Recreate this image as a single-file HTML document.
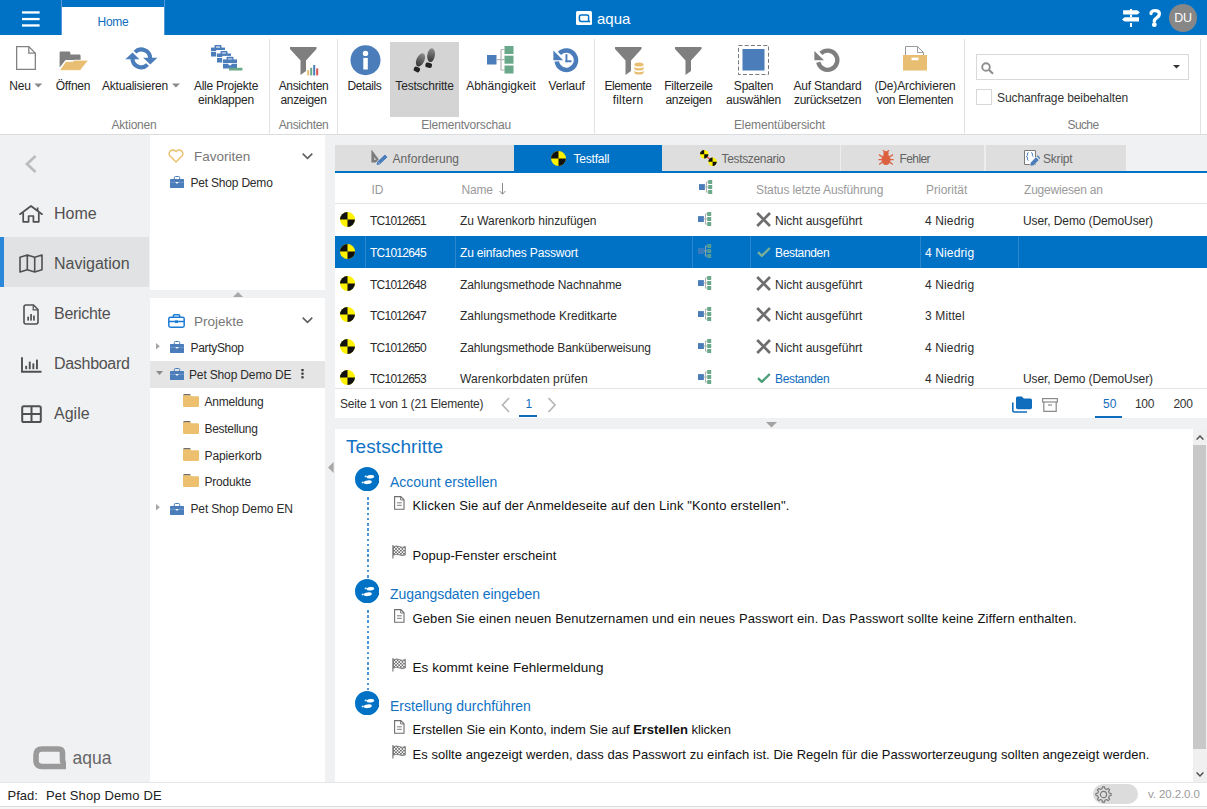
<!DOCTYPE html>
<html><head><meta charset="utf-8"><title>aqua</title>
<style>
*{box-sizing:border-box;margin:0;padding:0}
html,body{width:1207px;height:809px;overflow:hidden;background:#f0f1f3;font-family:"Liberation Sans",sans-serif;font-size:12px;color:#2b2b2b}
.abs{position:absolute}
#title{position:absolute;left:0;top:0;width:1207px;height:35px;background:#0072c6}
#hometab{position:absolute;left:62px;top:7px;width:102px;height:28px;background:#fff;color:#0f6cbd;font-size:12px;text-align:center;line-height:31px;letter-spacing:-0.3px}
#ribbon{position:absolute;left:0;top:35px;width:1207px;height:99px;background:#fff}
#ribline{position:absolute;left:0;top:134px;width:1207px;height:1px;background:#dcdcdc}
.sep{position:absolute;top:4px;width:1px;height:95px;background:#e2e2e2}
.rb{position:absolute;top:0;text-align:center;line-height:13.5px;font-size:12px;color:#262626;white-space:nowrap}
.rb .t{position:absolute;top:45px;left:0;transform:translateX(-50%);letter-spacing:-0.2px}
.gl{position:absolute;top:83px;font-size:12px;color:#7a7a7a;transform:translateX(-50%);white-space:nowrap;letter-spacing:-0.2px;line-height:14px}
#nav{position:absolute;left:0;top:135px;width:149px;height:647px;background:#f0f1f3}
.ni{position:absolute;left:0;width:149px;height:50px;font-size:16px;color:#505050}
.ni span{position:absolute;left:54px;top:17px;line-height:20px;white-space:nowrap}
#tree{position:absolute;left:150px;top:135px;width:175px;height:647px;background:#fff}
.tr{position:absolute;left:0;width:175px;height:26px;white-space:nowrap;letter-spacing:-0.2px}
.tr span{position:absolute;top:6px;line-height:14px}
#main{position:absolute;left:335px;top:135px;width:872px;height:647px}
.tab{position:absolute;top:10px;height:26px;background:#dedede;color:#646464;font-size:12px;line-height:14px;white-space:nowrap;letter-spacing:-0.2px}
.tab span{position:absolute;top:7px}
#grid{position:absolute;left:0;top:38px;width:872px;height:215px;background:#fff;overflow:hidden}
.hd{position:absolute;top:10px;line-height:14px;color:#9a9a9a;white-space:nowrap;letter-spacing:-0.2px}
.row{position:absolute;left:0;width:872px;height:32px;white-space:nowrap}
.row span{position:absolute;top:10px;line-height:14px;letter-spacing:-0.2px}
.row .id{left:35px;letter-spacing:-0.75px}
.row .nm{left:125px}
.row .st{left:440px}
.row .pr{left:590px;letter-spacing:0.13px}
.row .us{left:688px;letter-spacing:-0.1px}
.sel{background:#0072c6;color:#fff}
#pager{position:absolute;left:0;top:253px;width:872px;height:30px;background:#fff;border-top:1px solid #e4e4e4}
#steps{position:absolute;left:0;top:294px;width:872px;height:353px;background:#fff;overflow:hidden}
#status{position:absolute;left:0;top:782px;width:1207px;height:27px;background:#fff;border-top:1px solid #e6e6e6}
.stt{font-size:14px;line-height:18px;color:#0f72c4;white-space:nowrap}
.stx{font-size:13px;line-height:18px;color:#111;white-space:nowrap}
.sta{font-size:13.5px;line-height:18px;color:#111;white-space:nowrap;letter-spacing:0.04px}
</style></head><body>
<div id="title">
<div class="abs" style="left:61px;top:0;width:1px;height:35px;background:#4f9ad6"></div>
<div class="abs" style="left:164px;top:0;width:1px;height:35px;background:#4f9ad6"></div>
<div id="hometab">Home</div>
<svg class="abs" style="left:22px;top:11px;" width="18" height="16" viewBox="0 0 18 16"><rect x="0" y="0.3" width="17.6" height="2.3" fill="#fff"/><rect x="0" y="6.9" width="17.6" height="2.3" fill="#fff"/><rect x="0" y="13.3" width="17.6" height="2.3" fill="#fff"/></svg>
<svg class="abs" style="left:576px;top:11px;" width="16" height="14" viewBox="0 0 16 14"><rect x="0" y="0" width="16" height="14" rx="1.5" fill="#fff"/><path d="M5.2 3.9 H11 Q12.6 3.9 12.6 5.5 V9.2 L13.2 10.4 H5.2 Q3.4 10.4 3.4 8.6 V5.7 Q3.4 3.9 5.2 3.9Z" fill="none" stroke="#0072c6" stroke-width="1.5"/></svg>
<div class="abs" style="left:597px;top:9px;font-size:15px;line-height:20px;color:#fff">aqua</div>
<svg class="abs" style="left:1121px;top:8px;" width="20" height="20" viewBox="0 0 20 20"><rect x="9" y="1" width="2" height="2" fill="#fff"/><path d="M2.1 2.2H16.3L18.9 4.4L16.3 6.6H2.1Z" fill="#fff"/><rect x="9" y="6.6" width="2" height="2.7" fill="#fff"/><path d="M18 9.3H3.6L1 11.4L3.6 13.4H18Z" fill="#fff"/><rect x="9" y="15" width="2" height="4" fill="#fff"/></svg>
<svg class="abs" style="left:1147px;top:7px;" width="16" height="22" viewBox="0 0 16 22"><path d="M4 6.6C4 4.4 5.8 3.6 8 3.6C10.6 3.6 12.4 4.8 12.4 7C12.4 9 11 9.8 9.6 10.8C8 11.8 7.3 12.4 7.3 14.2" fill="none" stroke="#fff" stroke-width="3.3" stroke-linecap="round"/><circle cx="7.3" cy="17.7" r="2.4" fill="#fff"/></svg>
<div class="abs" style="left:1169px;top:4px;width:28px;height:28px;border-radius:14px;background:#878787;color:#fff;font-size:12.5px;line-height:29px;text-align:center;letter-spacing:-0.2px">DU</div>
</div>
<div id="ribbon">
<div class="sep" style="left:269px"></div><div class="sep" style="left:337px"></div><div class="sep" style="left:594px"></div><div class="sep" style="left:964px"></div><div class="sep" style="left:1200px"></div>
<div class="rb" style="left:26px"><svg class="abs" style="left:-10px;top:11px;" width="20" height="24" viewBox="0 0 20 24"><path d="M0.65 0.65H12.8L19.35 7.2V23.35H0.65Z" fill="#fff" stroke="#828282" stroke-width="1.3"/><path d="M12.8 0.65V7.2H19.35" fill="none" stroke="#828282" stroke-width="1.3"/></svg><div class="t">Neu<svg width="8" height="5" viewBox="0 0 8 5" style="margin-left:4px;vertical-align:2px"><path d="M0 0.5H8L4 4.5Z" fill="#8a8a8a"/></svg></div></div>
<div class="rb" style="left:73px"><svg class="abs" style="left:-14px;top:16px;" width="30" height="20" viewBox="0 0 30 20"><path d="M1.8 0.6H10Q11.4 0.6 11.4 2V3.6H20.2Q21.6 3.6 21.6 5V9H6.5L0.6 16.5V1.8Q0.6 0.6 1.8 0.6Z" fill="#7f7f7f"/><path d="M6.8 10.6H13.6L15.2 9.2H29.4L21.2 19.4H0.6Z" fill="#e8be72" stroke="#fff" stroke-width="0.7"/></svg><div class="t">Öffnen</div></div>
<div class="rb" style="left:141px"><svg class="abs" style="left:-16.4px;top:11.5px;" width="33" height="23" viewBox="0 0 33 23"><g fill="none" stroke="#4a7dba" stroke-width="4.1"><path d="M10.04 5.14A8.85 8.85 0 0 1 25.15 11.1"/><path d="M22.56 17.66A8.85 8.85 0 0 1 7.45 12"/></g><path d="M0.4 12.2L7.5 5.4L14.4 12.2Z" fill="#4a7dba"/><path d="M18.2 10.85H32.4L25.3 17.5Z" fill="#4a7dba"/></svg><div class="t">Aktualisieren<svg width="8" height="5" viewBox="0 0 8 5" style="margin-left:4px;vertical-align:2px"><path d="M0 0.5H8L4 4.5Z" fill="#8a8a8a"/></svg></div></div>
<div class="rb" style="left:226px"><svg class="abs" style="left:-15.2px;top:10.3px;" width="32" height="27" viewBox="0 0 32 27"><g transform="translate(0,0)"><path d="M4.5 0h5a1 1 0 0 1 1 1v2h-1.6v-1.4h-3.8v1.4h-1.6v-2a1 1 0 0 1 1-1z" fill="#4a7dba"/><rect x="0" y="2.6" width="14" height="3.6" fill="#4a7dba"/><path d="M0 7h5.6v1.4h2.8v-1.4h5.6v4.6h-14z" fill="#4a7dba"/></g><rect x="5.2" y="5" width="15.5" height="13" fill="#fff"/><g transform="translate(6,5.9)"><path d="M4.5 0h5a1 1 0 0 1 1 1v2h-1.6v-1.4h-3.8v1.4h-1.6v-2a1 1 0 0 1 1-1z" fill="#4a7dba"/><rect x="0" y="2.6" width="14" height="3.6" fill="#4a7dba"/><path d="M0 7h5.6v1.4h2.8v-1.4h5.6v4.6h-14z" fill="#4a7dba"/></g><rect x="11.2" y="10.9" width="15.5" height="13" fill="#fff"/><g transform="translate(12,11.8)"><path d="M4.5 0h5a1 1 0 0 1 1 1v2h-1.6v-1.4h-3.8v1.4h-1.6v-2a1 1 0 0 1 1-1z" fill="#4a7dba"/><rect x="0" y="2.6" width="14" height="3.6" fill="#4a7dba"/><path d="M0 7h5.6v1.4h2.8v-1.4h5.6v4.6h-14z" fill="#4a7dba"/></g><rect x="18" y="22.8" width="13.4" height="2.7" fill="#6aa88a"/></svg><div class="t"><span style="letter-spacing:-0.25px">Alle Projekte</span><br>einklappen</div></div>
<div class="rb" style="left:303.5px"><svg class="abs" style="left:-13.6px;top:12px;" width="30" height="29" viewBox="0 0 30 29"><path d="M0 0H26.5V2L16 13.5V24L10.5 28V13.5L0 2Z" fill="#7f7f7f"/><rect x="17.2" y="23.2" width="2" height="5.2" fill="#e8be72"/><rect x="20.2" y="20.8" width="2" height="7.6" fill="#6aa88a"/><rect x="23.2" y="18" width="2" height="10.4" fill="#4a7dba"/><rect x="26.2" y="21.4" width="2" height="7" fill="#d9534f"/></svg><div class="t"><span style="letter-spacing:-0.33px">Ansichten<br>anzeigen</span></div></div>
<div class="rb" style="left:364.5px"><svg class="abs" style="left:-15px;top:9.5px;" width="31" height="31" viewBox="0 0 31 31"><circle cx="15.5" cy="15.2" r="15" fill="#4a7dba"/><circle cx="15.5" cy="8.4" r="2.7" fill="#fff"/><rect x="13.3" y="12.9" width="4.5" height="11.6" fill="#fff"/></svg><div class="t"><span style="letter-spacing:-0.39px">Details</span></div></div>
<div class="abs" style="left:390px;top:7px;width:69px;height:75px;background:#d4d4d4"></div>
<div class="rb" style="left:424.5px"><svg class="abs" style="left:-12.5px;top:12.5px;" width="25" height="25" viewBox="0 0 25 25"><defs><linearGradient id="fg" x1="0" y1="0" x2="0" y2="1"><stop offset="0" stop-color="#8c8c8c"/><stop offset="1" stop-color="#363636"/></linearGradient></defs><ellipse cx="19.1" cy="7.2" rx="3.8" ry="6.9" transform="rotate(8 19.1 7.2)" fill="url(#fg)"/><rect x="13.4" y="14.8" width="6.6" height="4.9" rx="1.8" transform="rotate(12 16.7 17.2)" fill="#242424"/><ellipse cx="8.5" cy="11.9" rx="3.9" ry="7" transform="rotate(25 8.5 11.9)" fill="url(#fg)"/><rect x="1.8" y="19" width="6.2" height="4.9" rx="1.8" transform="rotate(25 4.9 21.4)" fill="#242424"/></svg><div class="t">Testschritte</div></div>
<div class="rb" style="left:501px"><svg class="abs" style="left:-14.2px;top:11px;" width="27" height="28" viewBox="0 0 27 28"><rect x="0" y="9" width="9.5" height="9.5" fill="#4a7dba"/><path d="M9.5 13.7H17.5M14 3.5V24H17.5M14 3.5H17.5" fill="none" stroke="#b5b5b5" stroke-width="1.2"/><rect x="17.5" y="0" width="9" height="8" fill="#6aa88a"/><rect x="17.5" y="9.7" width="9" height="8" fill="#6aa88a"/><rect x="17.5" y="19.5" width="9" height="8" fill="#6aa88a"/></svg><div class="t"><span style="letter-spacing:0.03px">Abhängigkeit</span></div></div>
<div class="rb" style="left:566.6px"><svg class="abs" style="left:-14px;top:12.6px;" width="26" height="25" viewBox="0 0 26 25"><path d="M3.7 13.55A9.7 9.7 0 1 0 6.44 5.34" fill="none" stroke="#4a7dba" stroke-width="4.5"/><path d="M0.4 2.4V12.2H10.1Z" fill="#4a7dba"/><rect x="12.5" y="6.2" width="1.9" height="8" fill="#4a7dba"/><rect x="12.5" y="12.3" width="6" height="1.9" fill="#4a7dba"/></svg><div class="t">Verlauf</div></div>
<div class="rb" style="left:628px"><svg class="abs" style="left:-13px;top:12px;" width="30" height="29" viewBox="0 0 30 29"><path d="M0 0H26.5V2L16 13.5V24L10.5 28V13.5L0 2Z" fill="#7f7f7f"/><rect x="18.4" y="14.6" width="11.2" height="14" fill="#fff"/><g fill="#e8be72"><ellipse cx="24" cy="17.6" rx="4.6" ry="2"/><path d="M19.4 19.2a4.6 2 0 0 0 9.2 0v2.4a4.6 2 0 0 1-9.2 0z"/><path d="M19.4 23.2a4.6 2 0 0 0 9.2 0v2.4a4.6 2 0 0 1-9.2 0z"/></g></svg><div class="t"><span style="letter-spacing:-0.44px">Elemente</span><br><span style="letter-spacing:0.17px">filtern</span></div></div>
<div class="rb" style="left:688.5px"><svg class="abs" style="left:-13.5px;top:12px;" width="27" height="28" viewBox="0 0 27 28"><path d="M0 0H26.5V2L16 13.5V24L10.5 28V13.5L0 2Z" fill="#7f7f7f"/></svg><div class="t"><span style="letter-spacing:-0.25px">Filterzeile</span><br><span style="letter-spacing:-0.34px">anzeigen</span></div></div>
<div class="rb" style="left:753.5px"><svg class="abs" style="left:-15.7px;top:10px;" width="31" height="30" viewBox="0 0 31 30"><rect x="0.5" y="0.5" width="30" height="29" fill="none" stroke="#7a7a7a" stroke-width="1" stroke-dasharray="4 2.2"/><rect x="4.5" y="4" width="22" height="21.5" fill="#4a7dba"/></svg><div class="t">Spalten<br><span style="letter-spacing:-0.29px">auswählen</span></div></div>
<div class="rb" style="left:827.5px"><svg class="abs" style="left:-13.6px;top:12.6px;" width="27" height="25" viewBox="0 0 27 25"><path d="M4.31 14.2A9.6 9.6 0 1 0 6.91 5.41" fill="none" stroke="#7f7f7f" stroke-width="4.4"/><path d="M0.4 2.9V12.2H10Z" fill="#7f7f7f"/></svg><div class="t"><span style="letter-spacing:-0.15px">Auf Standard</span><br><span style="letter-spacing:-0.3px">zurücksetzen</span></div></div>
<div class="rb" style="left:915px"><svg class="abs" style="left:-11.8px;top:11px;" width="24" height="25" viewBox="0 0 24 25"><path d="M2.5 0.5H14.5L20.5 6.5V10H2.5Z" fill="#fff" stroke="#9a9a9a"/><path d="M14.5 0.5V6.5H20.5" fill="none" stroke="#9a9a9a"/><rect x="0" y="9" width="24" height="15.5" fill="#e8be72"/><rect x="8.5" y="11.6" width="7" height="2.6" fill="#fff"/></svg><div class="t"><span style="letter-spacing:-0.15px">(De)Archivieren</span><br><span style="letter-spacing:-0.27px">von Elementen</span></div></div>
<div class="gl" style="left:134px;letter-spacing:-0.2px">Aktionen</div><div class="gl" style="left:303.5px;letter-spacing:-0.33px">Ansichten</div><div class="gl" style="left:466px;letter-spacing:-0.2px">Elementvorschau</div><div class="gl" style="left:779.5px;letter-spacing:-0.1px">Elementübersicht</div><div class="gl" style="left:1083px;letter-spacing:-0.62px">Suche</div>
<div class="abs" style="left:976px;top:19px;width:213px;height:26px;border:1px solid #d8d8d8;background:#fff"></div>
<svg class="abs" style="left:980.5px;top:26.5px;" width="13" height="13" viewBox="0 0 13 13"><circle cx="5" cy="5" r="3.8" fill="none" stroke="#8e8e8e" stroke-width="1.9"/><path d="M7.8 7.8L12 11.8" stroke="#8e8e8e" stroke-width="2.1"/></svg>
<svg class="abs" style="left:1173px;top:30px;" width="7" height="4" viewBox="0 0 7 4"><path d="M0 0H7L3.5 3.6Z" fill="#333"/></svg>
<div class="abs" style="left:976px;top:54px;width:16px;height:16px;border:1px solid #d8d8d8;background:#fff"></div>
<div class="abs" style="left:997px;top:56px;line-height:14px;white-space:nowrap;letter-spacing:-0.1px;color:#333">Suchanfrage beibehalten</div>
</div><div id="ribline"></div>
<div id="nav">
<svg class="abs" style="left:25px;top:20px;" width="12" height="18" viewBox="0 0 12 18"><path d="M10.5 1L2 9L10.5 17" fill="none" stroke="#bcbcbc" stroke-width="2.7"/></svg>
<div class="ni" style="top:52px"><svg class="abs" style="left:19px;top:18px;" width="24" height="18" viewBox="0 0 24 18"><path d="M1 9.2L12 1L23 9.2" fill="none" stroke="#505050" stroke-width="1.7" stroke-linejoin="round" stroke-linecap="round"/><path d="M4.2 7.5V16.8H9.6V11H14.4V16.8H19.8V7.5M18.6 2.5V6" fill="none" stroke="#505050" stroke-width="1.7" stroke-linejoin="round"/></svg><span>Home</span></div>
<div class="ni" style="top:102px;background:#e1e2e3"><div class="abs" style="left:0;top:0;width:4px;height:50px;background:#2b88d8"></div><svg class="abs" style="left:19px;top:17px;" width="24" height="19" viewBox="0 0 24 19"><path d="M1 3.2L8.3 1L15.7 3.2L23 1V15.8L15.7 18L8.3 15.8L1 18Z M8.3 1V15.8M15.7 3.2V18" fill="none" stroke="#505050" stroke-width="1.6" stroke-linejoin="round"/></svg><span>Navigation</span></div>
<div class="ni" style="top:152px"><svg class="abs" style="left:23px;top:17px;" width="16" height="21" viewBox="0 0 16 21"><path d="M3 1H10.5L15 5.5V18a2 2 0 0 1-2 2H3a2 2 0 0 1-2-2V3a2 2 0 0 1 2-2z" fill="none" stroke="#505050" stroke-width="1.6"/><path d="M10.2 1.4V5.8H14.6" fill="none" stroke="#505050" stroke-width="1.2"/><rect x="4.3" y="12.6" width="1.7" height="4" fill="#505050"/><rect x="7.2" y="10" width="1.7" height="6.6" fill="#505050"/><rect x="10.1" y="11.6" width="1.7" height="5" fill="#505050"/></svg><span style="letter-spacing:-0.29px">Berichte</span></div>
<div class="ni" style="top:202px"><svg class="abs" style="left:21px;top:20px;" width="21" height="16" viewBox="0 0 21 16"><path d="M1 0.2V14.8H20.5" fill="none" stroke="#505050" stroke-width="1.9"/><rect x="4.2" y="8.8" width="1.9" height="3.4" fill="#505050"/><rect x="7.8" y="4.6" width="1.9" height="7.6" fill="#505050"/><rect x="11.4" y="6.4" width="1.9" height="5.8" fill="#505050"/><rect x="15" y="2.6" width="1.9" height="9.6" fill="#505050"/></svg><span style="letter-spacing:-0.3px">Dashboard</span></div>
<div class="ni" style="top:252px"><svg class="abs" style="left:20.6px;top:18.4px;" width="22" height="19" viewBox="0 0 22 19"><rect x="1.2" y="1.2" width="18.6" height="15.8" rx="1.6" fill="none" stroke="#505050" stroke-width="2"/><path d="M1.2 9.1H19.8M10.5 1.2V17" stroke="#505050" stroke-width="2"/></svg><span>Agile</span></div>
<svg class="abs" style="left:33px;top:611px;" width="33" height="25" viewBox="0 0 33 25"><path d="M9 3H25.5Q29.5 3 29.5 7V14.5L31.5 20.5H9Q3 20.5 3 14.5V9Q3 3 9 3Z" fill="none" stroke="#9a9a9a" stroke-width="5.6" stroke-linejoin="round"/></svg>
<div class="abs" style="left:72.6px;top:611px;font-size:17.5px;line-height:24px;color:#666">aqua</div>
</div>
<div id="tree">
<svg class="abs" style="left:18px;top:14px;" width="16" height="14" viewBox="0 0 16 14"><path d="M8 13L1.8 6.8A3.6 3.6 0 0 1 8 2.6A3.6 3.6 0 0 1 14.2 6.8Z" fill="none" stroke="#ecbd6c" stroke-width="1.4" stroke-linejoin="round"/></svg>
<div class="abs" style="left:44px;top:12.5px;font-size:13.5px;line-height:18px;color:#777">Favoriten</div>
<svg class="abs" style="left:152px;top:18px;" width="11" height="7" viewBox="0 0 11 7"><path d="M0.7 0.7L5.5 5.3L10.3 0.7" fill="none" stroke="#5e5e5e" stroke-width="1.6"/></svg>
<div class="tr" style="top:35px"><svg class="abs" style="left:20px;top:6px;" width="14" height="12" viewBox="0 0 14 12"><path d="M4.3 3V1.6Q4.3 0.5 5.4 0.5H8.6Q9.7 0.5 9.7 1.6V3" fill="none" stroke="#4a7dba" stroke-width="1"/><rect x="0" y="2.9" width="14" height="9" rx="0.6" fill="#4a7dba"/><path d="M0 6.3H5.2L7 7.6L8.8 6.3H14" fill="none" stroke="#fff" stroke-width="0.5" opacity="0.45"/><path d="M5.2 6.1H8.8L7 7.7Z" fill="#fff"/></svg><span style="left:40.5px">Pet Shop Demo</span></div>
<div class="abs" style="left:0;top:155px;width:175px;height:8px;background:#f0f1f3"></div>
<svg class="abs" style="left:83px;top:157px;" width="10" height="5" viewBox="0 0 10 5"><path d="M0 5L5 0L10 5Z" fill="#a8a8a8"/></svg>
<svg class="abs" style="left:18px;top:179px;" width="17" height="14" viewBox="0 0 17 14"><rect x="0.8" y="3.2" width="15.4" height="10" rx="1.6" fill="none" stroke="#1a7cd5" stroke-width="1.5"/><path d="M5.4 3.2V1.6a0.8 0.8 0 0 1 .8-.8h4.6a0.8 0.8 0 0 1 .8.8V3.2M0.8 7.6H16.2" fill="none" stroke="#1a7cd5" stroke-width="1.5"/><rect x="7" y="6.4" width="3" height="2.6" fill="#1a7cd5"/></svg>
<div class="abs" style="left:44px;top:178px;font-size:13.5px;line-height:18px;color:#777">Projekte</div>
<svg class="abs" style="left:152px;top:182px;" width="11" height="7" viewBox="0 0 11 7"><path d="M0.7 0.7L5.5 5.3L10.3 0.7" fill="none" stroke="#5e5e5e" stroke-width="1.6"/></svg>
<div class="tr" style="top:200px"><svg class="abs" style="left:6px;top:7.5px;" width="4" height="7" viewBox="0 0 4 7"><path d="M0 0L3.8 3.3L0 6.6Z" fill="#a4a4a4"/></svg><svg class="abs" style="left:20px;top:6px;" width="14" height="12" viewBox="0 0 14 12"><path d="M4.3 3V1.6Q4.3 0.5 5.4 0.5H8.6Q9.7 0.5 9.7 1.6V3" fill="none" stroke="#4a7dba" stroke-width="1"/><rect x="0" y="2.9" width="14" height="9" rx="0.6" fill="#4a7dba"/><path d="M0 6.3H5.2L7 7.6L8.8 6.3H14" fill="none" stroke="#fff" stroke-width="0.5" opacity="0.45"/><path d="M5.2 6.1H8.8L7 7.7Z" fill="#fff"/></svg><span style="left:40.5px;letter-spacing:-0.32px">PartyShop</span></div>
<div class="tr" style="top:226px;height:27px;background:#e5e5e5"><svg class="abs" style="left:6px;top:10px;" width="7" height="4" viewBox="0 0 7 4"><path d="M0 0H7L3.5 4Z" fill="#8a8a8a"/></svg><svg class="abs" style="left:20px;top:7px;" width="14" height="12" viewBox="0 0 14 12"><path d="M4.3 3V1.6Q4.3 0.5 5.4 0.5H8.6Q9.7 0.5 9.7 1.6V3" fill="none" stroke="#4a7dba" stroke-width="1"/><rect x="0" y="2.9" width="14" height="9" rx="0.6" fill="#4a7dba"/><path d="M0 6.3H5.2L7 7.6L8.8 6.3H14" fill="none" stroke="#fff" stroke-width="0.5" opacity="0.45"/><path d="M5.2 6.1H8.8L7 7.7Z" fill="#fff"/></svg><span style="left:39px;top:7px;letter-spacing:-0.15px">Pet Shop Demo DE</span><svg class="abs" style="left:151px;top:8px;" width="3" height="10" viewBox="0 0 3 10"><rect x="0.4" y="0" width="2.2" height="2.2" fill="#333"/><rect x="0.4" y="3.6" width="2.2" height="2.2" fill="#333"/><rect x="0.4" y="7.2" width="2.2" height="2.2" fill="#333"/></svg></div>
<div class="tr" style="top:254px"><svg class="abs" style="left:33px;top:5px;" width="16" height="13" viewBox="0 0 16 13"><path d="M0.6 0.1H7.4V1.7H0.2Z" fill="#6e6e6e"/><path d="M0 2.4Q0 1.3 1.2 1.3H7.2L8.4 2.3H14.8Q16 2.3 16 3.5V11.8Q16 13 14.8 13H1.2Q0 13 0 11.8Z" fill="#ecc06e"/></svg><span style="left:54.5px">Anmeldung</span></div>
<div class="tr" style="top:281px"><svg class="abs" style="left:33px;top:5px;" width="16" height="13" viewBox="0 0 16 13"><path d="M0.6 0.1H7.4V1.7H0.2Z" fill="#6e6e6e"/><path d="M0 2.4Q0 1.3 1.2 1.3H7.2L8.4 2.3H14.8Q16 2.3 16 3.5V11.8Q16 13 14.8 13H1.2Q0 13 0 11.8Z" fill="#ecc06e"/></svg><span style="left:54.5px;letter-spacing:-0.3px">Bestellung</span></div>
<div class="tr" style="top:308px"><svg class="abs" style="left:33px;top:5px;" width="16" height="13" viewBox="0 0 16 13"><path d="M0.6 0.1H7.4V1.7H0.2Z" fill="#6e6e6e"/><path d="M0 2.4Q0 1.3 1.2 1.3H7.2L8.4 2.3H14.8Q16 2.3 16 3.5V11.8Q16 13 14.8 13H1.2Q0 13 0 11.8Z" fill="#ecc06e"/></svg><span style="left:54.5px;letter-spacing:-0.1px">Papierkorb</span></div>
<div class="tr" style="top:334px"><svg class="abs" style="left:33px;top:5px;" width="16" height="13" viewBox="0 0 16 13"><path d="M0.6 0.1H7.4V1.7H0.2Z" fill="#6e6e6e"/><path d="M0 2.4Q0 1.3 1.2 1.3H7.2L8.4 2.3H14.8Q16 2.3 16 3.5V11.8Q16 13 14.8 13H1.2Q0 13 0 11.8Z" fill="#ecc06e"/></svg><span style="left:54.5px">Produkte</span></div>
<div class="tr" style="top:361px"><svg class="abs" style="left:6px;top:8px;" width="4" height="7" viewBox="0 0 4 7"><path d="M0 0L3.8 3.3L0 6.6Z" fill="#a4a4a4"/></svg><svg class="abs" style="left:20px;top:7px;" width="14" height="12" viewBox="0 0 14 12"><path d="M4.3 3V1.6Q4.3 0.5 5.4 0.5H8.6Q9.7 0.5 9.7 1.6V3" fill="none" stroke="#4a7dba" stroke-width="1"/><rect x="0" y="2.9" width="14" height="9" rx="0.6" fill="#4a7dba"/><path d="M0 6.3H5.2L7 7.6L8.8 6.3H14" fill="none" stroke="#fff" stroke-width="0.5" opacity="0.45"/><path d="M5.2 6.1H8.8L7 7.7Z" fill="#fff"/></svg><span style="left:40.5px;letter-spacing:-0.15px">Pet Shop Demo EN</span></div>
</div>
<svg class="abs" style="left:328px;top:462px;" width="6" height="11" viewBox="0 0 6 11"><path d="M5.6 0V11L0 5.5Z" fill="#a8a8a8"/></svg>
<div id="main">
<div class="tab" style="left:0;width:179px"><svg class="abs" style="left:35.5px;top:3.6px;" width="18" height="18" viewBox="0 0 18 18"><path d="M0.4 0.6V13.4H10.2Z M3.2 8.2V10.8H5.3Z" fill="#7c7c7c" fill-rule="evenodd"/><path d="M5 16.6L5.5 13L13.9 5L17 8.2L8.6 16Z" fill="#4a7dba" stroke="#e6e6e6" stroke-width="0.9"/><path d="M7.2 13.2L8.6 14.7" stroke="#dfe8f4" stroke-width="0.6"/></svg><span style="left:57.5px;letter-spacing:0.05px">Anforderung</span></div>
<div class="tab" style="left:179px;width:148px;background:#0072c6;color:#fff"><svg class="abs" style="left:37px;top:5.5px;" width="15" height="15" viewBox="0 0 16 16"><circle cx="8" cy="8" r="8" fill="#fff200"/><path d="M8 0A8 8 0 0 0 0 8H8Z" fill="#111"/><path d="M8 16A8 8 0 0 0 16 8H8Z" fill="#111"/></svg><span style="left:59.5px">Testfall</span></div>
<div class="tab" style="left:327px;width:178px"><svg class="abs" style="left:37.8px;top:5px;" width="17" height="16" viewBox="0 0 17 16"><path d="M4 4L13 12" stroke="#d33" stroke-width="1.2"/><g><circle cx="4.2" cy="4.2" r="4.2" fill="#fff200"/><path d="M4.2 0A4.2 4.2 0 0 0 0 4.2H4.2Z M4.2 8.4A4.2 4.2 0 0 0 8.4 4.2H4.2Z" fill="#111"/></g><g transform="translate(8.4,7.6)"><circle cx="4.2" cy="4.2" r="4.2" fill="#fff200"/><path d="M4.2 0A4.2 4.2 0 0 0 0 4.2H4.2Z M4.2 8.4A4.2 4.2 0 0 0 8.4 4.2H4.2Z" fill="#111"/></g></svg><span style="left:59.5px;letter-spacing:-0.33px">Testszenario</span></div>
<div class="abs" style="left:505px;top:10px;width:1px;height:26px;background:#ededed"></div>
<div class="tab" style="left:506px;width:143px"><svg class="abs" style="left:37px;top:5px;" width="16" height="16" viewBox="0 0 16 16"><ellipse cx="8" cy="9.6" rx="4.5" ry="5.4" fill="#dc6141"/><circle cx="8" cy="3.6" r="2.6" fill="#dc6141"/><path d="M4.4 7L1 4.6M4 9.6H0.4M4.4 12L1.2 14.6M11.6 7L15 4.6M12 9.6H15.6M11.6 12L14.8 14.6M6.6 1.8L5 0.2M9.4 1.8L11 0.2" stroke="#dc6141" stroke-width="1.3" fill="none"/></svg><span style="left:58.5px;letter-spacing:-0.6px">Fehler</span></div>
<div class="abs" style="left:649px;top:10px;width:2px;height:26px;background:#ededed"></div>
<div class="tab" style="left:651px;width:140px"><svg class="abs" style="left:37.5px;top:5px;" width="16" height="16" viewBox="0 0 16 16"><path d="M0.5 0.5H11.5V14.5H0.5Z" fill="#fff" stroke="#7a7a7a"/><path d="M4.6 2.6Q3.4 2.6 3.4 4V5.4Q3.4 6.4 2.4 6.6Q3.4 6.8 3.4 7.8V9.2Q3.4 10.4 4.6 10.4M7.2 2.6Q8.4 2.6 8.4 4V5.4Q8.4 6.4 9.4 6.6" fill="none" stroke="#4a7dba" stroke-width="1"/><path d="M6 16.2L6.4 12.8L12 7L15.2 10L9.4 15.8Z" fill="#4a7dba" stroke="#e6e6e6" stroke-width="0.7"/><path d="M12.8 6.2L13.8 5.2L16.4 7.8L15.6 9Z" fill="#4a7dba"/></svg><span style="left:57px">Skript</span></div>
<div class="abs" style="left:0;top:36px;width:872px;height:2px;background:#0072c6"></div><div id="grid"><div class="hd" style="left:36.5px">ID</div><div class="hd" style="left:126.5px">Name</div><svg class="abs" style="left:164px;top:10px;" width="7" height="12" viewBox="0 0 7 12"><path d="M3.5 0V11M0.6 8L3.5 11.2L6.4 8" fill="none" stroke="#8a8a8a" stroke-width="1"/></svg><svg class="abs" style="left:364px;top:6.5px;opacity:1" width="14" height="14" viewBox="0 0 14 14"><rect x="0" y="4.1" width="5.9" height="5.9" fill="#4a7dba"/><path d="M5.9 7H9.2M7.5 2V12H9.2M7.5 2H9.2" fill="none" stroke="#b2b2b2" stroke-width="1.1"/><rect x="9.2" y="0" width="4" height="4" fill="#6aa88a"/><rect x="9.2" y="5" width="4" height="4" fill="#6aa88a"/><rect x="9.2" y="10" width="4" height="4" fill="#6aa88a"/></svg><div class="hd" style="left:421px;letter-spacing:-0.12px">Status letzte Ausführung</div><div class="hd" style="left:591px;letter-spacing:0">Priorität</div><div class="hd" style="left:689px">Zugewiesen an</div><div class="abs" style="left:0;top:30px;width:872px;height:1px;background:#e4e4e4"></div><div class="row" style="top:31px;height:32px"><svg class="abs" style="left:5.2px;top:7.8px;" width="15" height="15" viewBox="0 0 16 16"><circle cx="8" cy="8" r="8" fill="#fff200"/><path d="M8 0A8 8 0 0 0 0 8H8Z" fill="#111"/><path d="M8 16A8 8 0 0 0 16 8H8Z" fill="#111"/></svg><span class="id">TC1012651</span><span class="nm" style="letter-spacing:-0.05px">Zu Warenkorb hinzufügen</span><svg class="abs" style="left:363px;top:8px;opacity:1" width="14" height="14" viewBox="0 0 14 14"><rect x="0" y="4.1" width="5.9" height="5.9" fill="#4a7dba"/><path d="M5.9 7H9.2M7.5 2V12H9.2M7.5 2H9.2" fill="none" stroke="#b2b2b2" stroke-width="1.1"/><rect x="9.2" y="0" width="4" height="4" fill="#6aa88a"/><rect x="9.2" y="5" width="4" height="4" fill="#6aa88a"/><rect x="9.2" y="10" width="4" height="4" fill="#6aa88a"/></svg><svg class="abs" style="left:420.6px;top:8px;" width="15" height="15" viewBox="0 0 15 15"><path d="M1.2 1L14 14M14 1L1.2 14" stroke="#6e6e6e" stroke-width="2.7"/></svg><span class="st" style="letter-spacing:0">Nicht ausgeführt</span><span class="pr">4 Niedrig</span><span class="us">User, Demo (DemoUser)</span></div><div class="row sel" style="top:63px;height:32px"><div class="abs" style="left:30px;top:0;width:1px;height:32px;background:#2b86d0"></div><div class="abs" style="left:120px;top:0;width:1px;height:32px;background:#2b86d0"></div><div class="abs" style="left:357px;top:0;width:1px;height:32px;background:#2b86d0"></div><div class="abs" style="left:415px;top:0;width:1px;height:32px;background:#2b86d0"></div><div class="abs" style="left:585px;top:0;width:1px;height:32px;background:#2b86d0"></div><div class="abs" style="left:683px;top:0;width:1px;height:32px;background:#2b86d0"></div><svg class="abs" style="left:5.2px;top:7.8px;" width="15" height="15" viewBox="0 0 16 16"><circle cx="8" cy="8" r="8" fill="#fff200"/><path d="M8 0A8 8 0 0 0 0 8H8Z" fill="#111"/><path d="M8 16A8 8 0 0 0 16 8H8Z" fill="#111"/></svg><span class="id">TC1012645</span><span class="nm" style="letter-spacing:-0.17px">Zu einfaches Passwort</span><svg class="abs" style="left:363px;top:8px;opacity:0.78" width="14" height="14" viewBox="0 0 14 14"><rect x="0" y="4.1" width="5.9" height="5.9" fill="#4a7dba"/><path d="M5.9 7H9.2M7.5 2V12H9.2M7.5 2H9.2" fill="none" stroke="#b2b2b2" stroke-width="1.1"/><rect x="9.2" y="0" width="4" height="4" fill="#6aa88a"/><rect x="9.2" y="5" width="4" height="4" fill="#6aa88a"/><rect x="9.2" y="10" width="4" height="4" fill="#6aa88a"/></svg><svg class="abs" style="left:421.6px;top:11.4px;" width="14" height="10" viewBox="0 0 14 10"><path d="M1 5.2L4.8 8.8L12.8 1" fill="none" stroke="#7bb096" stroke-width="2.4"/></svg><span class="st" style="letter-spacing:-0.35px">Bestanden</span><span class="pr">4 Niedrig</span><span class="us"></span></div><div class="row" style="top:95px;height:31px"><svg class="abs" style="left:5.2px;top:7.8px;" width="15" height="15" viewBox="0 0 16 16"><circle cx="8" cy="8" r="8" fill="#fff200"/><path d="M8 0A8 8 0 0 0 0 8H8Z" fill="#111"/><path d="M8 16A8 8 0 0 0 16 8H8Z" fill="#111"/></svg><span class="id">TC1012648</span><span class="nm" style="letter-spacing:-0.1px">Zahlungsmethode Nachnahme</span><svg class="abs" style="left:363px;top:8px;opacity:1" width="14" height="14" viewBox="0 0 14 14"><rect x="0" y="4.1" width="5.9" height="5.9" fill="#4a7dba"/><path d="M5.9 7H9.2M7.5 2V12H9.2M7.5 2H9.2" fill="none" stroke="#b2b2b2" stroke-width="1.1"/><rect x="9.2" y="0" width="4" height="4" fill="#6aa88a"/><rect x="9.2" y="5" width="4" height="4" fill="#6aa88a"/><rect x="9.2" y="10" width="4" height="4" fill="#6aa88a"/></svg><svg class="abs" style="left:420.6px;top:8px;" width="15" height="15" viewBox="0 0 15 15"><path d="M1.2 1L14 14M14 1L1.2 14" stroke="#6e6e6e" stroke-width="2.7"/></svg><span class="st" style="letter-spacing:0">Nicht ausgeführt</span><span class="pr">4 Niedrig</span><span class="us"></span></div><div class="row" style="top:126px;height:32px"><svg class="abs" style="left:5.2px;top:7.8px;" width="15" height="15" viewBox="0 0 16 16"><circle cx="8" cy="8" r="8" fill="#fff200"/><path d="M8 0A8 8 0 0 0 0 8H8Z" fill="#111"/><path d="M8 16A8 8 0 0 0 16 8H8Z" fill="#111"/></svg><span class="id">TC1012647</span><span class="nm" style="letter-spacing:-0.02px">Zahlungsmethode Kreditkarte</span><svg class="abs" style="left:363px;top:8px;opacity:1" width="14" height="14" viewBox="0 0 14 14"><rect x="0" y="4.1" width="5.9" height="5.9" fill="#4a7dba"/><path d="M5.9 7H9.2M7.5 2V12H9.2M7.5 2H9.2" fill="none" stroke="#b2b2b2" stroke-width="1.1"/><rect x="9.2" y="0" width="4" height="4" fill="#6aa88a"/><rect x="9.2" y="5" width="4" height="4" fill="#6aa88a"/><rect x="9.2" y="10" width="4" height="4" fill="#6aa88a"/></svg><svg class="abs" style="left:420.6px;top:8px;" width="15" height="15" viewBox="0 0 15 15"><path d="M1.2 1L14 14M14 1L1.2 14" stroke="#6e6e6e" stroke-width="2.7"/></svg><span class="st" style="letter-spacing:0">Nicht ausgeführt</span><span class="pr">3 Mittel</span><span class="us"></span></div><div class="row" style="top:158px;height:31px"><svg class="abs" style="left:5.2px;top:7.8px;" width="15" height="15" viewBox="0 0 16 16"><circle cx="8" cy="8" r="8" fill="#fff200"/><path d="M8 0A8 8 0 0 0 0 8H8Z" fill="#111"/><path d="M8 16A8 8 0 0 0 16 8H8Z" fill="#111"/></svg><span class="id">TC1012650</span><span class="nm" style="letter-spacing:-0.13px">Zahlungsmethode Banküberweisung</span><svg class="abs" style="left:363px;top:8px;opacity:1" width="14" height="14" viewBox="0 0 14 14"><rect x="0" y="4.1" width="5.9" height="5.9" fill="#4a7dba"/><path d="M5.9 7H9.2M7.5 2V12H9.2M7.5 2H9.2" fill="none" stroke="#b2b2b2" stroke-width="1.1"/><rect x="9.2" y="0" width="4" height="4" fill="#6aa88a"/><rect x="9.2" y="5" width="4" height="4" fill="#6aa88a"/><rect x="9.2" y="10" width="4" height="4" fill="#6aa88a"/></svg><svg class="abs" style="left:420.6px;top:8px;" width="15" height="15" viewBox="0 0 15 15"><path d="M1.2 1L14 14M14 1L1.2 14" stroke="#6e6e6e" stroke-width="2.7"/></svg><span class="st" style="letter-spacing:0">Nicht ausgeführt</span><span class="pr">4 Niedrig</span><span class="us"></span></div><div class="row" style="top:189px;height:32px"><svg class="abs" style="left:5.2px;top:7.8px;" width="15" height="15" viewBox="0 0 16 16"><circle cx="8" cy="8" r="8" fill="#fff200"/><path d="M8 0A8 8 0 0 0 0 8H8Z" fill="#111"/><path d="M8 16A8 8 0 0 0 16 8H8Z" fill="#111"/></svg><span class="id">TC1012653</span><span class="nm" style="letter-spacing:0.1px">Warenkorbdaten prüfen</span><svg class="abs" style="left:363px;top:8px;opacity:1" width="14" height="14" viewBox="0 0 14 14"><rect x="0" y="4.1" width="5.9" height="5.9" fill="#4a7dba"/><path d="M5.9 7H9.2M7.5 2V12H9.2M7.5 2H9.2" fill="none" stroke="#b2b2b2" stroke-width="1.1"/><rect x="9.2" y="0" width="4" height="4" fill="#6aa88a"/><rect x="9.2" y="5" width="4" height="4" fill="#6aa88a"/><rect x="9.2" y="10" width="4" height="4" fill="#6aa88a"/></svg><svg class="abs" style="left:421.6px;top:11.4px;" width="14" height="10" viewBox="0 0 14 10"><path d="M1 5.2L4.8 8.8L12.8 1" fill="none" stroke="#4a9e78" stroke-width="2.4"/></svg><span class="st" style="color:#0f6cbd;letter-spacing:-0.35px">Bestanden</span><span class="pr">4 Niedrig</span><span class="us">User, Demo (DemoUser)</span></div></div><div id="pager"><div class="abs" style="left:5px;top:8px;line-height:14px;letter-spacing:-0.2px;color:#333;white-space:nowrap">Seite 1 von 1 (21 Elemente)</div>
<svg class="abs" style="left:166px;top:8px;" width="10" height="16" viewBox="0 0 10 16"><path d="M8 1L1.5 8L8 15" fill="none" stroke="#b6b6b6" stroke-width="1.7"/></svg><div class="abs" style="left:190.5px;top:8px;line-height:14px;color:#0f6cbd">1</div><div class="abs" style="left:184px;top:26px;width:18px;height:2px;background:#0f6cbd"></div><svg class="abs" style="left:212px;top:8px;" width="10" height="16" viewBox="0 0 10 16"><path d="M1.5 1L8 8L1.5 15" fill="none" stroke="#b6b6b6" stroke-width="1.7"/></svg>
<svg class="abs" style="left:677px;top:7px;" width="21" height="17" viewBox="0 0 21 17"><path d="M0.8 6.4V14.4Q0.8 16 2.4 16H15" fill="none" stroke="#0f6cbd" stroke-width="1.6"/><path d="M4 2Q4 0.5 5.5 0.5H9.8L11.8 2.6H18.4Q20 2.6 20 4.2V11.6Q20 13.2 18.4 13.2H5.6Q4 13.2 4 11.6Z" fill="#0f6cbd"/></svg>
<svg class="abs" style="left:707px;top:9px;" width="16" height="14" viewBox="0 0 16 14"><rect x="0.6" y="0.6" width="14.8" height="3.4" fill="none" stroke="#8a8a8a" stroke-width="1.2"/><path d="M1.8 4V13.4H14.2V4" fill="none" stroke="#8a8a8a" stroke-width="1.2"/><path d="M6 7H10" stroke="#8a8a8a" stroke-width="1.2"/></svg>
<div class="abs" style="left:768px;top:8px;line-height:14px;color:#0f6cbd">50</div><div class="abs" style="left:760px;top:27px;width:27px;height:2px;background:#0f6cbd"></div>
<div class="abs" style="left:800px;top:8px;line-height:14px;color:#333;letter-spacing:-0.3px">100</div><div class="abs" style="left:838.5px;top:8px;line-height:14px;color:#333;letter-spacing:-0.3px">200</div></div>
<svg class="abs" style="left:431px;top:286.6px;" width="11" height="6" viewBox="0 0 11 6"><path d="M0 0H11L5.5 5.6Z" fill="#a2a2a2"/></svg><div id="steps">
<div class="abs" style="left:11px;top:6px;font-size:19px;line-height:24px;color:#0f72c4;letter-spacing:0.1px">Testschritte</div><svg class="abs" style="left:19.8px;top:37.5px;" width="24.4" height="24.4" viewBox="0 0 24 24"><circle cx="12" cy="12" r="12" fill="#0072c6"/><ellipse cx="15.2" cy="9.6" rx="3.7" ry="1.75" transform="rotate(-6 15.2 9.6)" fill="#fff"/><ellipse cx="10.6" cy="9.3" rx="1.1" ry="0.9" fill="#fff" opacity="0.9"/><ellipse cx="12.6" cy="15" rx="4" ry="1.8" transform="rotate(-6 12.6 15)" fill="#fff"/><ellipse cx="7.6" cy="15.2" rx="1.1" ry="1" fill="#fff" opacity="0.9"/></svg><div class="abs stt" style="left:55px;top:44px">Account erstellen</div><div class="abs" style="left:32.3px;top:68.2px;width:1.8px;height:80.6px;background:repeating-linear-gradient(to bottom,#4d96dc 0,#4d96dc 2.6px,transparent 2.6px,transparent 5.2px)"></div><svg class="abs" style="left:59px;top:67px;" width="11" height="14" viewBox="0 0 11 14"><path d="M0.6 0.6H6.8L10 3.8V13.3H0.6Z" fill="#fff" stroke="#6e6e6e" stroke-width="1.1"/><path d="M6.6 0.8V4H9.8" fill="none" stroke="#6e6e6e" stroke-width="0.9"/><path d="M3 6.8H7.8M3 9.3H7.8" stroke="#6e6e6e" stroke-width="0.9"/></svg><div class="abs stx" style="left:77.5px;top:68px;letter-spacing:0.145px">Klicken Sie auf der Anmeldeseite auf den Link "Konto erstellen".</div><svg class="abs" style="left:57.4px;top:116px;" width="15" height="14" viewBox="0 0 15 14"><defs><pattern id="ck1" width="3.2" height="3.2" patternUnits="userSpaceOnUse"><rect width="1.6" height="1.6" fill="#6a6a6a"/><rect x="1.6" y="1.6" width="1.6" height="1.6" fill="#6a6a6a"/></pattern></defs><path d="M0.9 0V13.4" stroke="#707070" stroke-width="1.1"/><path d="M1.5 1.7Q4.4 0.3 7.4 1.7T13.3 1.5V9.9Q10.4 11.3 7.4 9.9T1.5 10.1Z" fill="#fff"/><path d="M1.5 1.7Q4.4 0.3 7.4 1.7T13.3 1.5V9.9Q10.4 11.3 7.4 9.9T1.5 10.1Z" fill="url(#ck1)" stroke="#707070" stroke-width="0.9"/></svg><div class="abs stx" style="left:77.5px;top:118px;letter-spacing:0.07px">Popup-Fenster erscheint</div><svg class="abs" style="left:19.8px;top:150px;" width="24.4" height="24.4" viewBox="0 0 24 24"><circle cx="12" cy="12" r="12" fill="#0072c6"/><ellipse cx="15.2" cy="9.6" rx="3.7" ry="1.75" transform="rotate(-6 15.2 9.6)" fill="#fff"/><ellipse cx="10.6" cy="9.3" rx="1.1" ry="0.9" fill="#fff" opacity="0.9"/><ellipse cx="12.6" cy="15" rx="4" ry="1.8" transform="rotate(-6 12.6 15)" fill="#fff"/><ellipse cx="7.6" cy="15.2" rx="1.1" ry="1" fill="#fff" opacity="0.9"/></svg><div class="abs stt" style="left:55px;top:156px;letter-spacing:-0.05px">Zugangsdaten eingeben</div><div class="abs" style="left:32.3px;top:180.8px;width:1.8px;height:80.6px;background:repeating-linear-gradient(to bottom,#4d96dc 0,#4d96dc 2.6px,transparent 2.6px,transparent 5.2px)"></div><svg class="abs" style="left:59px;top:179.5px;" width="11" height="14" viewBox="0 0 11 14"><path d="M0.6 0.6H6.8L10 3.8V13.3H0.6Z" fill="#fff" stroke="#6e6e6e" stroke-width="1.1"/><path d="M6.6 0.8V4H9.8" fill="none" stroke="#6e6e6e" stroke-width="0.9"/><path d="M3 6.8H7.8M3 9.3H7.8" stroke="#6e6e6e" stroke-width="0.9"/></svg><div class="abs stx" style="left:77.5px;top:181px;letter-spacing:0.11px">Geben Sie einen neuen Benutzernamen und ein neues Passwort ein. Das Passwort sollte keine Ziffern enthalten.</div><svg class="abs" style="left:57.4px;top:228.5px;" width="15" height="14" viewBox="0 0 15 14"><defs><pattern id="ck2" width="3.2" height="3.2" patternUnits="userSpaceOnUse"><rect width="1.6" height="1.6" fill="#6a6a6a"/><rect x="1.6" y="1.6" width="1.6" height="1.6" fill="#6a6a6a"/></pattern></defs><path d="M0.9 0V13.4" stroke="#707070" stroke-width="1.1"/><path d="M1.5 1.7Q4.4 0.3 7.4 1.7T13.3 1.5V9.9Q10.4 11.3 7.4 9.9T1.5 10.1Z" fill="#fff"/><path d="M1.5 1.7Q4.4 0.3 7.4 1.7T13.3 1.5V9.9Q10.4 11.3 7.4 9.9T1.5 10.1Z" fill="url(#ck2)" stroke="#707070" stroke-width="0.9"/></svg><div class="abs sta" style="left:77.5px;top:230px">Es kommt keine Fehlermeldung</div><svg class="abs" style="left:19.8px;top:262px;" width="24.4" height="24.4" viewBox="0 0 24 24"><circle cx="12" cy="12" r="12" fill="#0072c6"/><ellipse cx="15.2" cy="9.6" rx="3.7" ry="1.75" transform="rotate(-6 15.2 9.6)" fill="#fff"/><ellipse cx="10.6" cy="9.3" rx="1.1" ry="0.9" fill="#fff" opacity="0.9"/><ellipse cx="12.6" cy="15" rx="4" ry="1.8" transform="rotate(-6 12.6 15)" fill="#fff"/><ellipse cx="7.6" cy="15.2" rx="1.1" ry="1" fill="#fff" opacity="0.9"/></svg><div class="abs stt" style="left:55px;top:268px">Erstellung durchführen</div><svg class="abs" style="left:59px;top:290.5px;" width="11" height="14" viewBox="0 0 11 14"><path d="M0.6 0.6H6.8L10 3.8V13.3H0.6Z" fill="#fff" stroke="#6e6e6e" stroke-width="1.1"/><path d="M6.6 0.8V4H9.8" fill="none" stroke="#6e6e6e" stroke-width="0.9"/><path d="M3 6.8H7.8M3 9.3H7.8" stroke="#6e6e6e" stroke-width="0.9"/></svg><div class="abs stx" style="left:77.5px;top:292px;letter-spacing:-0.03px">Erstellen Sie ein Konto, indem Sie auf <b>Erstellen</b> klicken</div><svg class="abs" style="left:57.4px;top:315.7px;" width="15" height="14" viewBox="0 0 15 14"><defs><pattern id="ck3" width="3.2" height="3.2" patternUnits="userSpaceOnUse"><rect width="1.6" height="1.6" fill="#6a6a6a"/><rect x="1.6" y="1.6" width="1.6" height="1.6" fill="#6a6a6a"/></pattern></defs><path d="M0.9 0V13.4" stroke="#707070" stroke-width="1.1"/><path d="M1.5 1.7Q4.4 0.3 7.4 1.7T13.3 1.5V9.9Q10.4 11.3 7.4 9.9T1.5 10.1Z" fill="#fff"/><path d="M1.5 1.7Q4.4 0.3 7.4 1.7T13.3 1.5V9.9Q10.4 11.3 7.4 9.9T1.5 10.1Z" fill="url(#ck3)" stroke="#707070" stroke-width="0.9"/></svg><div class="abs stx" style="left:77.5px;top:317px;letter-spacing:0.04px">Es sollte angezeigt werden, dass das Passwort zu einfach ist. Die Regeln für die Passworterzeugung sollten angezeigt werden.</div><div class="abs" style="left:858px;top:0;width:14px;height:353px;background:#f0f0f0"></div>
<div class="abs" style="left:858px;top:16px;width:13px;height:304px;background:#c8c8c8"></div>
<svg class="abs" style="left:861px;top:6px;" width="8" height="5" viewBox="0 0 8 5"><path d="M0.6 4.6L4 1L7.4 4.6" fill="none" stroke="#505050" stroke-width="1.4"/></svg>
<svg class="abs" style="left:861px;top:343px;" width="8" height="5" viewBox="0 0 8 5"><path d="M0.6 0.4L4 4L7.4 0.4" fill="none" stroke="#505050" stroke-width="1.4"/></svg>
</div></div>
<div id="status"><div class="abs" style="left:7.5px;top:4px;font-size:13px;line-height:17px;color:#222;white-space:nowrap">Pfad:</div><div class="abs" style="left:46px;top:4px;font-size:13px;line-height:17px;color:#222;white-space:nowrap;letter-spacing:0.15px">Pet Shop Demo DE</div>
<div class="abs" style="left:1093px;top:1px;width:45px;height:20px;border-radius:10px;background:#dcdcdc"></div>
<svg class="abs" style="left:1095px;top:3.3px;" width="17" height="17" viewBox="0 0 17 17"><g fill="none" stroke="#777" stroke-width="1.1" stroke-linejoin="round"><circle cx="8.5" cy="8.5" r="3.1"/><path d="M7.12 2.76L7.42 0.88L9.58 0.88L9.88 2.76L11.58 3.47L13.12 2.34L14.66 3.88L13.53 5.42L14.24 7.12L16.12 7.42L16.12 9.58L14.24 9.88L13.53 11.58L14.66 13.12L13.12 14.66L11.58 13.53L9.88 14.24L9.58 16.12L7.42 16.12L7.12 14.24L5.42 13.53L3.88 14.66L2.34 13.12L3.47 11.58L2.76 9.88L0.88 9.58L0.88 7.42L2.76 7.12L3.47 5.42L2.34 3.88L3.88 2.34L5.42 3.47Z"/></g></svg>
<div class="abs" style="left:1148px;top:4px;font-size:11.5px;line-height:15px;color:#9a9a9a;white-space:nowrap;letter-spacing:-0.1px">v. 20.2.0.0</div>
<div class="abs" style="left:0;top:23px;width:1207px;height:1px;background:#dadada"></div>
<div class="abs" style="left:0;top:24px;width:1207px;height:3px;background:#f6f6f6"></div>
</div>
</body></html>
